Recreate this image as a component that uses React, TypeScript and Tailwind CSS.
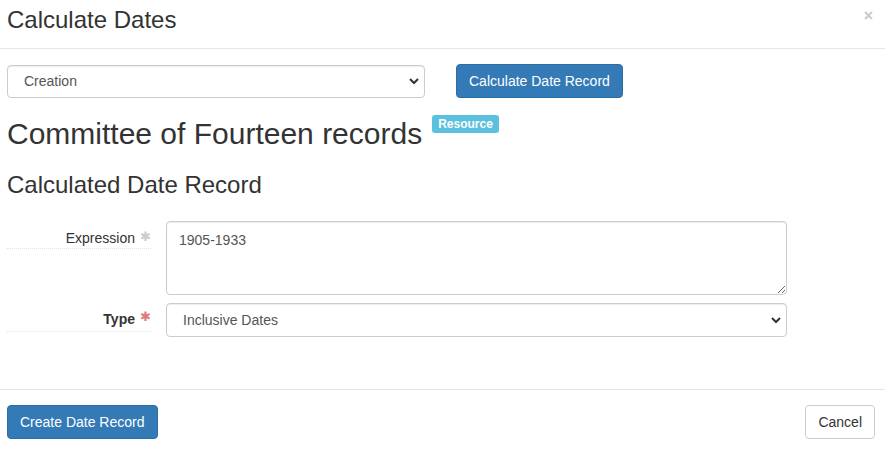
import React from "react";

const Chevron = () => (
  <svg
    width="10"
    height="7"
    viewBox="0 0 10 7"
    className="absolute right-[6px] top-1/2 -translate-y-1/2 pointer-events-none"
  >
    <path d="M1 1.5 L5 5.5 L9 1.5" fill="none" stroke="#333" strokeWidth="2" />
  </svg>
);

const SelectBox = ({ value, className }: { value: string; className: string }) => (
  <div className={`relative ${className}`}>
    <select
      defaultValue={value}
      className="w-full h-full appearance-none bg-white border border-[#ccc] rounded-[4px] pl-[16px] text-[14px] text-[#555] shadow-[inset_0_1px_1px_rgba(0,0,0,0.075)] outline-none"
    >
      <option>{value}</option>
    </select>
    <Chevron />
  </div>
);

export default function App() {
  return (
    <div
      className="w-[885px] h-[449px] bg-white text-[#333] overflow-hidden"
      style={{ fontFamily: '"Liberation Sans", Arial, sans-serif' }}
    >
      {/* header */}
      <div className="h-[49px] border-b border-[#e5e5e5] flex items-start justify-between pl-[7px] pr-[12px]">
        <h4 className="text-[24px] leading-[26px] mt-[7px]">Calculate Dates</h4>
        <button className="text-[#c8c8c8] text-[16px] font-bold leading-none mt-[8px]">×</button>
      </div>

      {/* body */}
      <div className="px-[7px] pt-[15px] h-[341px] border-b border-[#e5e5e5]">
        <div className="flex items-center gap-[31px]">
          <SelectBox value="Creation" className="w-[418px] h-[33px]" />
          <button className="h-[34px] px-[12px] bg-[#337ab7] border border-[#2e6da4] rounded-[4px] text-white text-[14px]">
            Calculate Date Record
          </button>
        </div>

        <div className="flex items-start mt-[14px]">
          <h2 className="text-[30px] leading-[33px] mt-[5px]">Committee of Fourteen records</h2>
          <span className="ml-[10px] bg-[#5bc0de] text-white text-[12px] font-bold leading-[12px] px-[6px] py-[3px] rounded-[3px] mt-[3px]">
            Resource
          </span>
        </div>

        <h3 className="text-[24px] leading-[26px] mt-[22px]">Calculated Date Record</h3>

        <div className="mt-[23px] flex flex-col gap-[8px]">
          <div className="flex items-start">
            <div className="w-[144px] border-b border-dotted border-[#e3e3e3] pt-[7px] leading-[20px] flex justify-end items-start text-[14px]">
              <span>Expression</span>
              <span className="text-[#ccc] ml-[5px] text-[13px] leading-[14px] mt-[2px]">✱</span>
            </div>
            <textarea
              defaultValue="1905-1933"
              className="ml-[15px] w-[621px] h-[74px] border border-[#ccc] rounded-[4px] px-[12px] py-[8px] text-[14px] text-[#555] resize-y outline-none shadow-[inset_0_1px_1px_rgba(0,0,0,0.075)]"
            />
          </div>
          <div className="flex items-start">
            <div className="w-[144px] border-b border-dotted border-[#e3e3e3] pt-[6px] pb-[2px] leading-[20px] flex justify-end items-start text-[14px] font-bold">
              <span>Type</span>
              <span className="text-[#e07a7a] ml-[5px] text-[13px] leading-[14px] mt-[1px] font-normal">✱</span>
            </div>
            <SelectBox value="Inclusive Dates" className="ml-[15px] w-[621px] h-[34px]" />
          </div>
        </div>
      </div>

      {/* footer */}
      <div className="flex items-center justify-between pl-[7px] pr-[10px] pt-[15px]">
        <button className="h-[34px] px-[12px] bg-[#337ab7] border border-[#2e6da4] rounded-[4px] text-white text-[14px]">
          Create Date Record
        </button>
        <button className="h-[34px] px-[12px] bg-white border border-[#ccc] rounded-[4px] text-[#333] text-[14px]">
          Cancel
        </button>
      </div>
    </div>
  );
}
